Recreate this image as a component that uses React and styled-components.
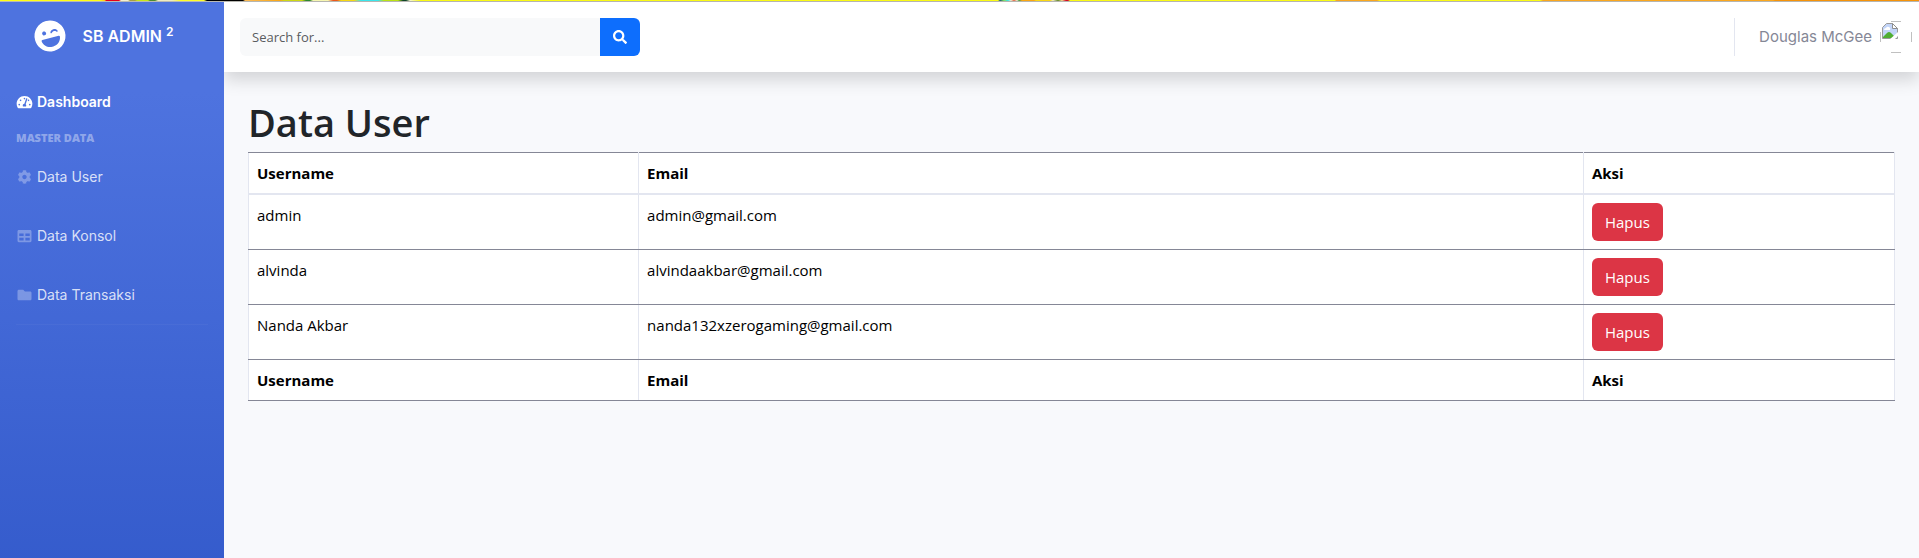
import React from "react";
import styled, { createGlobalStyle } from "styled-components";
import { FaCog, FaFolder, FaLaughWink, FaSearch, FaTable, FaTachometerAlt } from "react-icons/fa";

const UI_FONT = '"Open Sans", "Noto Sans", sans-serif';
const NAV_FONT = 'Inter, "Open Sans", sans-serif';

const GlobalStyle = createGlobalStyle`
  *, *::before, *::after { box-sizing: border-box; }
  body {
    margin: 0;
    background: #f8f9fc;
    color: #212529;
    font-family: ${UI_FONT};
    font-size: 15px;
    line-height: 24px;
  }
`;

const Page = styled.div`
  display: flex;
  flex-direction: column;
  min-height: 100vh;
`;

const ColorStrip = styled.div`
  height: 2px;
  border-bottom: 1px solid #b9b9b4;
  background: linear-gradient(
    90deg,
    #ffff14 0 100px, #ffc814 105px, #e60019 106px 119px, #f4f0d0 121px 128px,
    #a8a040 130px 135px, #c8e619 137px 148px, #4c8c2c 150px 155px, #f0ecc0 158px 172px,
    #ffff28 180px 204px, #000 207px 243px, #ffbe5a 245px, #ffaa14 280px, #d2dc14 284px 302px,
    #2d8c2d 306px 310px, #fafab4 313px 328px, #f05a1e 333px 337px, #fadc14 341px 354px,
    #3ceaf0 361px 378px, #bee614 384px 398px, #0f4628 403px 406px, #fafad2 410px,
    #ffff14 420px 998px, #145a78 1000px, #8ce65a 1004px, #3ceaf0 1008px, #f5f0d2 1011px,
    #e66446 1014px, #f5f0d2 1017px, #46a046 1019px, #ffaa14 1022px 1034px, #ffdc14 1036px 1050px,
    #f5f0c8 1053px, #648c28 1058px, #ffdc96 1062px, #d70a28 1066px 1068px, #ffff14 1070px 1335px,
    #ffaa1e 1336px 1377px, #ffff14 1380px 1540px, #ffaa1e 1543px 1773px, #fa960a 1775px
  );
`;

const Body = styled.div`
  display: flex;
  flex: 1;
`;

const Sidebar = styled.nav`
  position: relative;
  z-index: 1;
  flex: 0 0 224px;
  background: linear-gradient(180deg, #4e73df 90px, #224abe 920px);
  color: #fff;
  font-family: ${NAV_FONT};
`;

const Brand = styled.a`
  display: flex;
  align-items: center;
  justify-content: center;
  gap: 16px;
  height: 68px;
  margin-bottom: 12px;
  padding-right: 16px;
  color: #fff;
  font-size: 16px;
  font-weight: 600;
  text-decoration: none;

  svg { font-size: 32px; transform: rotate(-15deg); }
  sup { font-size: 12px; line-height: 0; }
`;

const NavItem = styled.a`
  display: flex;
  align-items: center;
  gap: 4px;
  height: ${(p) => (p.$active ? "40px" : "59px")};
  padding: 0 16px;
  color: ${(p) => (p.$active ? "#fff" : "rgba(255, 255, 255, 0.8)")};
  font-size: 14px;
  font-weight: ${(p) => (p.$active ? 600 : 400)};
  text-decoration: none;

  svg {
    width: 17px;
    color: ${(p) => (p.$active ? "#fff" : "rgba(255, 255, 255, 0.3)")};
  }
`;

const NavHeading = styled.div`
  padding: 8px 16px 1px;
  color: rgba(255, 255, 255, 0.4);
  font-family: ${UI_FONT};
  font-size: 11px;
  font-weight: 800;
  line-height: 16px;
  text-transform: uppercase;
`;

const Divider = styled.hr`
  margin: 0 16px;
  border: 0;
  border-top: 1px solid rgba(255, 255, 255, 0.04);
`;

const Content = styled.div`
  flex: 1;
  min-width: 0;
`;

const Topbar = styled.header`
  display: flex;
  align-items: center;
  justify-content: space-between;
  height: 70px;
  padding: 0 7px 0 16px;
  background: #fff;
  box-shadow: 0 8px 16px rgba(0, 0, 0, 0.15);
`;

const SearchForm = styled.form`
  display: flex;
  width: 400px;
  height: 38px;
`;

const SearchInput = styled.input`
  flex: 1;
  min-width: 0;
  padding: 0 12px;
  border: 0;
  border-radius: 6px 0 0 6px;
  background: #f8f9fa;
  color: #212529;
  font-family: ${UI_FONT};
  font-size: 13px;

  &::placeholder { color: #595c5f; opacity: 1; }
`;

const SearchButton = styled.button`
  display: grid;
  place-items: center;
  width: 40px;
  border: 0;
  border-radius: 0 6px 6px 0;
  background: #0d6efd;
  color: #fff;
  font-size: 14px;
`;

const UserArea = styled.div`
  display: flex;
  align-items: center;
  height: 38px;
  padding-left: 24px;
  border-left: 1px solid #e3e6f0;
`;

const UserLink = styled.a`
  display: flex;
  align-items: center;
  gap: 8px;
  color: #858796;
  font-family: ${NAV_FONT};
  font-size: 15px;
  text-decoration: none;
`;

const Main = styled.main`
  padding: 24px;
`;

const Title = styled.h1`
  margin: 0 0 4px;
  font-size: 38px;
  font-weight: 600;
  line-height: 52px;
`;

const Table = styled.table`
  width: 100%;
  table-layout: fixed;
  border-collapse: collapse;
  background: #fff;
  color: #000;

  th, td {
    padding: 8px;
    border: 1px solid #858796;
    border-left-color: #e3e6f0;
    border-right-color: #e3e6f0;
    text-align: left;
    vertical-align: top;
  }
  thead th { border-bottom: 2px solid #e3e6f0; }
`;

const Col = styled.col`
  width: ${(p) => p.$width};
`;

const DeleteButton = styled.button`
  display: block;
  height: 38px;
  padding: 0 13px;
  border: 0;
  border-radius: 6px;
  background: #dc3545;
  color: #fff;
  font-family: ${UI_FONT};
  font-size: 15px;
`;

function MissingAvatar() {
  return (
    <svg width="32" height="32" viewBox="0 0 32 32" role="img" aria-label="Profile">
      <path d="M11 .5h10M11 31.500h10M.5 11v10M31.500 11v10" stroke="#c0c0c0" />
      <path d="M2.500 6.500l4-4h6l5 5v10h-15z" fill="#c3d5f8" stroke="#9a9a9a" />
      <path d="M12.500 2.500v5h5z" fill="#fff" stroke="#8e8e8e" />
      <path d="M4 9q0-2 2-2 1-2 3-1 2 1 1 3z" fill="#fff" />
      <path d="M3 17v-1l4-4q2-2 4 0l5 5z" fill="#4fae32" />
      <path d="M9 19l9-8v4l-4 4z" fill="#fff" />
    </svg>
  );
}

const links = [
  { label: "Data User", Icon: FaCog },
  { label: "Data Konsol", Icon: FaTable },
  { label: "Data Transaksi", Icon: FaFolder },
];

const users = [
  { name: "admin", email: "admin@gmail.com" },
  { name: "alvinda", email: "alvindaakbar@gmail.com" },
  { name: "Nanda Akbar", email: "nanda132xzerogaming@gmail.com" },
];

const HeadingRow = () => (
  <tr>
    <th scope="col">Username</th>
    <th scope="col">Email</th>
    <th scope="col">Aksi</th>
  </tr>
);

export default function App() {
  return (
    <>
      <GlobalStyle />
      <Page>
        <ColorStrip />
        <Body>
          <Sidebar>
            <Brand href="#">
              <FaLaughWink />
              <span>SB ADMIN <sup>2</sup></span>
            </Brand>
            <NavItem href="#" $active>
              <FaTachometerAlt />
              <span>Dashboard</span>
            </NavItem>
            <NavHeading>Master Data</NavHeading>
            {links.map(({ label, Icon }) => (
              <NavItem href="#" key={label}>
                <Icon />
                <span>{label}</span>
              </NavItem>
            ))}
            <Divider />
          </Sidebar>
          <Content>
            <Topbar>
              <SearchForm onSubmit={(e) => e.preventDefault()}>
                <SearchInput type="text" placeholder="Search for..." aria-label="Search" />
                <SearchButton type="submit" aria-label="Submit search">
                  <FaSearch />
                </SearchButton>
              </SearchForm>
              <UserArea>
                <UserLink href="#">
                  <span>Douglas McGee</span>
                  <MissingAvatar />
                </UserLink>
              </UserArea>
            </Topbar>
            <Main>
              <Title>Data User</Title>
              <Table>
                <colgroup>
                  <Col $width="23.7%" />
                  <Col $width="57.4%" />
                  <Col $width="18.9%" />
                </colgroup>
                <thead><HeadingRow /></thead>
                <tbody>
                  {users.map((user) => (
                    <tr key={user.email}>
                      <td>{user.name}</td>
                      <td>{user.email}</td>
                      <td><DeleteButton type="button">Hapus</DeleteButton></td>
                    </tr>
                  ))}
                </tbody>
                <tfoot><HeadingRow /></tfoot>
              </Table>
            </Main>
          </Content>
        </Body>
      </Page>
    </>
  );
}
